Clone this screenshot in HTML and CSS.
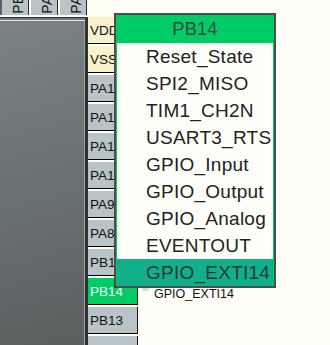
FILE: index.html
```html
<!DOCTYPE html>
<html lang="en">
    <head>
        <meta charset="UTF-8">
        <meta name="viewport" content="width=device-width, initial-scale=1.0">
        <title>PB14 pin menu</title>
        <link rel="stylesheet" href="styles.css">
    </head>
    <body>
        <div class="board">
            <div class="left">
                <div class="top-pins">
                    <div class="tpin"><span>PB</span></div>
                    <div class="tpin"><span>PA</span></div>
                    <div class="tpin"><span>PA</span></div>
                </div>
                <div class="chip"></div>
            </div>
            <div class="pins">
                <div class="row"><div class="pin power">VDD</div></div>
                <div class="row"><div class="pin power">VSS</div></div>
                <div class="row"><div class="pin">PA15</div></div>
                <div class="row"><div class="pin">PA12</div></div>
                <div class="row"><div class="pin">PA11</div></div>
                <div class="row"><div class="pin">PA10</div></div>
                <div class="row"><div class="pin">PA9</div></div>
                <div class="row"><div class="pin">PA8</div></div>
                <div class="row"><div class="pin">PB15</div></div>
                <div class="row"><div class="pin on">PB14</div><span class="dot"></span><span class="label">GPIO_EXTI14</span></div>
                <div class="row"><div class="pin">PB13</div></div>
                <div class="row"><div class="pin"></div></div>
            </div>
        </div>

        <div class="menu">
            <div class="menu-head">PB14</div>
            <ul class="menu-list">
                <li>Reset_State</li>
                <li>SPI2_MISO</li>
                <li>TIM1_CH2N</li>
                <li>USART3_RTS</li>
                <li>GPIO_Input</li>
                <li>GPIO_Output</li>
                <li>GPIO_Analog</li>
                <li>EVENTOUT</li>
                <li class="sel">GPIO_EXTI14</li>
            </ul>
        </div>
    </body>
</html>
```

FILE: styles.css
```css
*{
    margin: 0;
    padding: 0;
    box-sizing: border-box;
}

body{
    width: 330px;
    height: 345px;
    overflow: hidden;
    position: relative;
    background-color: #fffff8;
    font-family: "Liberation Sans", Arial, sans-serif;
}

.board{
    display: flex;
}

.left{
    width: 88px;
    flex-shrink: 0;
}

.top-pins{
    display: flex;
    gap: 2px;
    height: 15px;
    border-left: 2px solid #5c6263;
}

.tpin{
    width: 27px;
    height: 15px;
    overflow: hidden;
    background: #b8c4c8;
    border-right: 1px solid #2a2a2a;
    display: flex;
    justify-content: center;
    align-items: flex-end;
    padding-left: 6px;
    padding-bottom: 1px;
}

.tpin span{
    writing-mode: vertical-rl;
    transform: rotate(180deg);
    font-size: 14px;
    line-height: 12px;
    color: #111;
}

.chip{
    margin-top: 2px;
    height: 330px;
    border-top: 1px solid #2b2f30;
    border-right: 3px solid #2e3233;
    background: linear-gradient(165deg, #7a8283 0%, #6c7374 45%, #5a5f60 100%);
    box-shadow: inset 0 2px 0 #6f7778, inset 0 3px 0 #e4e8e8, inset -1px 0 0 #9aa2a3;
}

.pins{
    padding-top: 17px;
    display: flex;
    flex-direction: column;
}

.row{
    display: flex;
    align-items: center;
    margin-bottom: 2px;
}

.pin{
    width: 50px;
    height: 27px;
    padding-left: 2px;
    display: flex;
    align-items: center;
    font-size: 13.5px;
    color: #111;
    background: #b8c4c8;
    border-bottom: 1px solid #000;
    border-right: 1px solid #1a1a1a;
}

.power{
    background: #f7f2cc;
}

.on{
    background: #00cc66;
    color: #fff;
}

.dot{
    width: 7px;
    height: 4px;
    margin-left: 4px;
    margin-bottom: 5px;
    border-radius: 50%;
    background: #d8d8d4;
}

.label{
    margin-left: 5px;
    padding-top: 4px;
    font-size: 12.5px;
    color: #111;
}

.menu{
    position: absolute;
    left: 114px;
    top: 13px;
    width: 162px;
    height: 275px;
    border: 2px solid #4a4e4e;
    background: #fffffa;
}

.menu-head{
    height: 28px;
    background: #00cc66;
    color: #3a4a42;
    font-size: 18.5px;
    line-height: 28px;
    text-align: center;
}

.menu-list{
    list-style: none;
    border-left: 1px solid #00cc66;
    border-right: 1px solid #00cc66;
}

.menu-list li{
    height: 27px;
    line-height: 27px;
    padding-left: 29px;
    font-size: 19px;
    letter-spacing: 0.25px;
    color: #222;
    white-space: nowrap;
}

.menu-list .sel{
    background: #12b08a;
    color: #2b3834;
}
```
